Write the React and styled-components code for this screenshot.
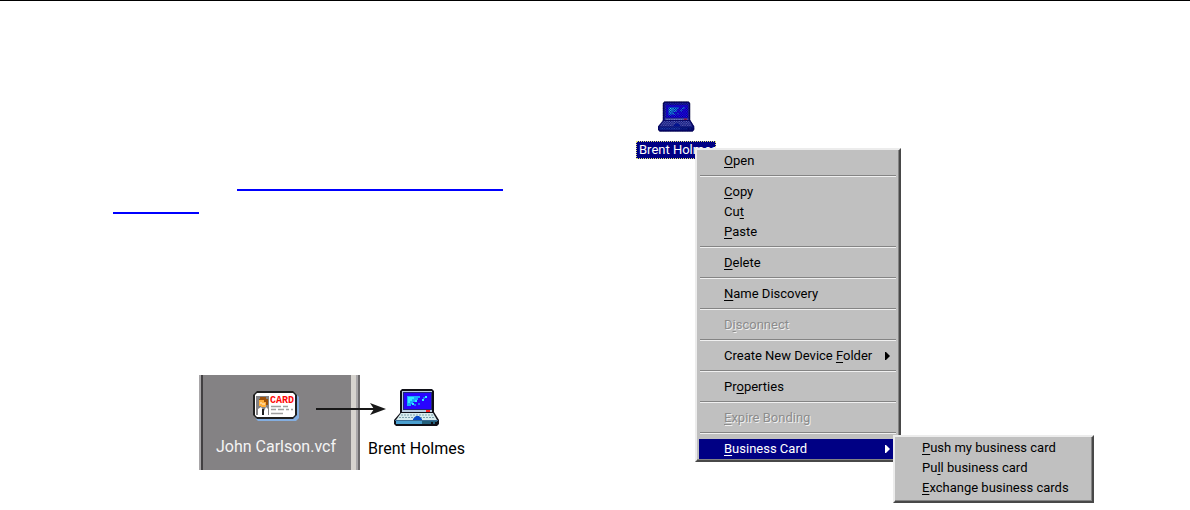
import React from "react";
import styled, { createGlobalStyle, css } from "styled-components";

const GlobalStyle = createGlobalStyle`
  *, *::before, *::after { box-sizing: border-box; }
  body { margin: 0; background: #fff; color: #000; font-family: Roboto, "Liberation Sans", Arial, sans-serif; }
  svg { display: block; }
`;

const Page = styled.main`
  display: grid;
  grid-template-columns: 523fr 554fr;
  min-height: 510px;
  padding-left: 113px;
  border-top: 1px solid #000;
`;

const Article = styled.section`
  display: flex;
  flex-direction: column;
  align-items: flex-start;
  padding-top: 188px;
`;

const LinkBlock = styled.a`
  display: grid;
  width: 390px;
  row-gap: 21px;
`;

const LinkLine = styled.span`
  width: ${(p) => p.$width}px;
  height: 2px;
  background: #00f;
  justify-self: ${(p) => p.$align || "start"};
`;

const Figure = styled.figure`
  position: relative;
  display: flex;
  gap: 8px;
  margin: 161px 0 0 86px;
`;

const iconColumn = css`
  display: flex;
  flex-direction: column;
  align-items: center;
`;

const FolderPane = styled.div`
  ${iconColumn}
  gap: 15px;
  width: 161px;
  height: 95px;
  padding: 16px 7px 0 0;
  background: #848284;
  border-left: 2px solid #a8a6a8;
  border-right: 2px solid #6c6a6c;
  box-shadow: inset 2px 0 #424042, inset -2px 0 #a8a6a8, inset -7px 0 #d6d3ce;
`;

const Device = styled.div`
  ${iconColumn}
  gap: 13px;
  width: 97px;
  padding-top: 14px;
`;

const FileLabel = styled.span`
  font-size: 16px;
  line-height: 20px;
  white-space: nowrap;
  color: ${(p) => (p.$light ? "#f4f4f4" : "#000")};
`;

const Arrow = styled.svg`
  position: absolute;
  left: 117px;
  top: 27px;
`;

const Desktop = styled.section`
  position: relative;
  padding-top: 100px;
`;

const SelectedDevice = styled.div`
  ${iconColumn}
  gap: 9px;
  width: 80px;
`;

const SelectedLabel = styled.span`
  width: 100%;
  padding: 0 2px;
  border: 1px dotted #e6e67a;
  background: #000084;
  color: #fff;
  font-size: 13px;
  line-height: 16px;
  white-space: nowrap;
`;

const Menu = styled.div`
  position: absolute;
  z-index: 1;
  left: 59px;
  top: 147px;
  width: 206px;
  padding: 1px 2px;
  background: #c0c0c0;
  border: 2px solid;
  border-color: #ececec #484848 #484848 #ececec;
  box-shadow: inset -1px -1px #848484;
`;

const SubMenu = styled(Menu)`
  left: calc(100% - 4px);
  top: -4px;
  width: 201px;
  padding-bottom: 3px;
`;

const MenuRow = styled.div`
  position: relative;
`;

const MenuItem = styled.button`
  display: flex;
  align-items: center;
  justify-content: space-between;
  width: 100%;
  height: 20px;
  padding: 0 7px 0 25px;
  border: 0;
  background: ${(p) => (p.$active ? "#000084" : "transparent")};
  color: ${(p) => (p.$active ? "#fff" : "#000")};
  font: 13px/20px Roboto, "Liberation Sans", Arial, sans-serif;
  text-align: left;
  white-space: nowrap;

  u { text-underline-offset: 2px; text-decoration-skip-ink: none; }

  &:disabled {
    color: #8c8c8c;
    text-shadow: 1px 1px #f0f0f0;
  }
`;

const Divider = styled.hr`
  height: 2px;
  margin: 4px 1px 5px;
  border: 0;
  border-top: 1px solid #848484;
  background: #f0f0f0;
`;

function Submark() {
  return (
    <svg width="5" height="8" viewBox="0 0 5 8" aria-hidden="true">
      <path d="M0 0H1L5 4L1 8H0Z" fill="currentColor" />
    </svg>
  );
}

function CardIcon() {
  return (
    <svg width="46" height="31" viewBox="0 0 46 31" aria-hidden="true">
      <path d="M5 3H43L46 6V27L43 30H5L3 28Z" fill="#84aee0" />
      <path d="M4 0H40L44 4V24L40 28H4L0 24V4Z" fill="#202020" />
      <path d="M4 2H40L42 4V24L40 26H4L2 24V4Z" fill="#fff" />
      <rect x="3" y="5" width="13" height="19" fill="#848284" />
      <path d="M7 6H13V8H15V14H6V8H7Z" fill="#9c5008" />
      <path d="M6 9H11V11H13V16H8V15H6Z" fill="#ffad38" />
      <path d="M7 11H9V12H12V14H9V13H7Z" fill="#ffd08a" />
      <path d="M5 18L8 16L11 20L13 16L15 18V24H5Z" fill="#fff" />
      <path d="M9 18H11V24H9Z" fill="#202020" />
      <text x="17" y="12" fill="#ff0808" fontFamily="Liberation Mono, monospace" fontSize="10" fontWeight="700">CARD</text>
      <path d="M18 15.5H28M30 15.5H35M18 18.5H23M25 18.5H31M33 18.5H36M38 18.5H40M18 22.5H30" stroke="#a0a0a0" strokeWidth="1.5" />
    </svg>
  );
}

const LAPTOP = "M9 0H38L40 2V23L45 31V35L43 37H2L0 35V31L6 24V2L8 0Z";

function ComputerIcon({ width, height, selected }) {
  return (
    <svg width={width} height={height} viewBox="0 0 46 37" aria-hidden="true">
      <path d={LAPTOP} fill="#101018" />
      <path d="M8 2H38V23H8Z" fill="#b8cce0" />
      <path d="M9 3H38V21H9Z" fill="#202878" />
      <path d="M10 4H37V20H10Z" fill="#2804ff" />
      <path d="M13 7H26V9H24V11H22V13H19V15H17V17H13Z" fill="#18a8ff" />
      <path d="M14 8H20V10H18V12H16V14H14ZM21 11H23V13H21ZM18 14H20V16H18ZM28 10H30V12H28ZM31 7H33V9H31Z" fill="#30e8ff" />
      <path d="M20 15H22V17H20ZM24 14H26V16H24ZM29 8H31V10H29Z" fill="#1a78f0" />
      <rect x="32" y="21" width="4" height="2" fill="#ff2020" />
      <path d="M7 24H39L43 31H2Z" fill="#d8ecee" />
      <path d="M7 26H39M5 28.5H41" stroke="#7ca0ac" strokeWidth="1" strokeDasharray="2 1" />
      <path d="M1 31H44V32H1Z" fill="#396b94" />
      <path d="M2 32H28V35H2Z" fill="#4ba0d0" />
      <path d="M28 32H43V35H28Z" fill="#24617c" />
      <path d="M19 30L22 27H25L28 30V31H19Z" fill="#084ac8" />
      <path d="M37 33H39V35H37ZM41 33H43V35H41Z" fill="#101018" />
      {selected && (
        <>
          <defs>
            <pattern id="dither" width="3" height="3" patternUnits="userSpaceOnUse">
              <path d="M0 0H1.5V1.5H0ZM1.5 1.5H3V3H1.5Z" fill="#000084" />
            </pattern>
          </defs>
          <path d={LAPTOP} fill="url(#dither)" />
          <path d="M6 23H40L45 31V35L43 37H2L0 35V31Z" fill="#000078" opacity=".5" />
          <path d="M8 1H39V3H9V23H7V2ZM38 3H39V23H38Z" fill="#000084" opacity=".7" />
        </>
      )}
    </svg>
  );
}

export default function App() {
  return (
    <>
      <GlobalStyle />
      <Page>
        <Article>
          <LinkBlock href="#">
            <LinkLine $width={266} $align="end" />
            <LinkLine $width={86} />
          </LinkBlock>
          <Figure>
            <FolderPane>
              <CardIcon />
              <FileLabel $light>John Carlson.vcf</FileLabel>
            </FolderPane>
            <Device>
              <ComputerIcon width={46} height={37} />
              <FileLabel>Brent Holmes</FileLabel>
            </Device>
            <Arrow width="71" height="14" viewBox="0 0 71 14" aria-hidden="true">
              <path d="M0 7H60" stroke="#181818" strokeWidth="2" />
              <path d="M54 1L70 7L54 13L58 7Z" fill="#181818" />
            </Arrow>
          </Figure>
        </Article>
        <Desktop>
          <SelectedDevice>
            <ComputerIcon width={37} height={31} selected />
            <SelectedLabel>Brent Holmes</SelectedLabel>
          </SelectedDevice>
          <Menu role="menu">
            <MenuItem role="menuitem"><span><u>O</u>pen</span></MenuItem>
            <Divider />
            <MenuItem role="menuitem"><span><u>C</u>opy</span></MenuItem>
            <MenuItem role="menuitem"><span>Cu<u>t</u></span></MenuItem>
            <MenuItem role="menuitem"><span><u>P</u>aste</span></MenuItem>
            <Divider />
            <MenuItem role="menuitem"><span><u>D</u>elete</span></MenuItem>
            <Divider />
            <MenuItem role="menuitem"><span><u>N</u>ame Discovery</span></MenuItem>
            <Divider />
            <MenuItem role="menuitem" disabled><span>D<u>i</u>sconnect</span></MenuItem>
            <Divider />
            <MenuItem role="menuitem" aria-haspopup="menu"><span>Create New Device <u>F</u>older</span><Submark /></MenuItem>
            <Divider />
            <MenuItem role="menuitem"><span>Pr<u>o</u>perties</span></MenuItem>
            <Divider />
            <MenuItem role="menuitem" disabled><span><u>E</u>xpire Bonding</span></MenuItem>
            <Divider />
            <MenuRow>
              <MenuItem role="menuitem" aria-haspopup="menu" aria-expanded="true" $active><span><u>B</u>usiness Card</span><Submark /></MenuItem>
              <SubMenu role="menu">
                <MenuItem role="menuitem"><span><u>P</u>ush my business card</span></MenuItem>
                <MenuItem role="menuitem"><span>Pu<u>l</u>l business card</span></MenuItem>
                <MenuItem role="menuitem"><span><u>E</u>xchange business cards</span></MenuItem>
              </SubMenu>
            </MenuRow>
          </Menu>
        </Desktop>
      </Page>
    </>
  );
}
